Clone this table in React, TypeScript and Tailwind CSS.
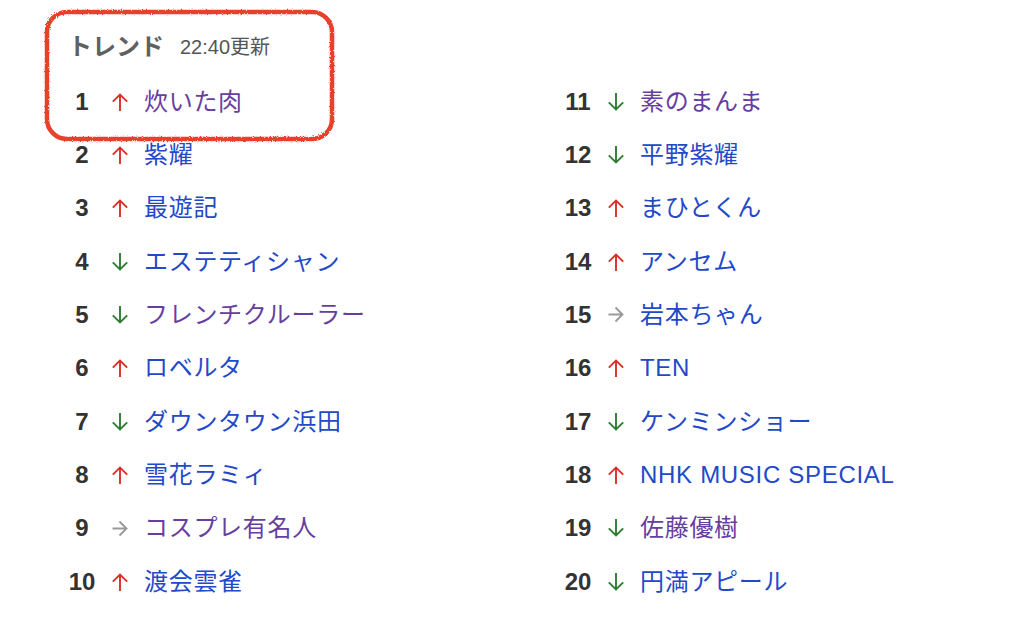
type Dir = 'up' | 'down' | 'flat';

interface Trend {
  rank: number;
  dir: Dir;
  word: string;
  visited?: boolean;
}

const left: Trend[] = [
  { rank: 1, dir: 'up', word: '炊いた肉', visited: true },
  { rank: 2, dir: 'up', word: '紫耀' },
  { rank: 3, dir: 'up', word: '最遊記' },
  { rank: 4, dir: 'down', word: 'エステティシャン' },
  { rank: 5, dir: 'down', word: 'フレンチクルーラー', visited: true },
  { rank: 6, dir: 'up', word: 'ロベルタ' },
  { rank: 7, dir: 'down', word: 'ダウンタウン浜田' },
  { rank: 8, dir: 'up', word: '雪花ラミィ' },
  { rank: 9, dir: 'flat', word: 'コスプレ有名人', visited: true },
  { rank: 10, dir: 'up', word: '渡会雲雀' },
];

const right: Trend[] = [
  { rank: 11, dir: 'down', word: '素のまんま', visited: true },
  { rank: 12, dir: 'down', word: '平野紫耀' },
  { rank: 13, dir: 'up', word: 'まひとくん' },
  { rank: 14, dir: 'up', word: 'アンセム' },
  { rank: 15, dir: 'flat', word: '岩本ちゃん' },
  { rank: 16, dir: 'up', word: 'TEN' },
  { rank: 17, dir: 'down', word: 'ケンミンショー' },
  { rank: 18, dir: 'up', word: 'NHK MUSIC SPECIAL' },
  { rank: 19, dir: 'down', word: '佐藤優樹', visited: true },
  { rank: 20, dir: 'down', word: '円満アピール' },
];

function Arrow({ dir }: { dir: Dir }) {
  if (dir === 'flat') {
    return (
      <svg width="16" height="17" viewBox="0 0 16 17" fill="none" stroke="#9a9a9a" strokeWidth="1.9">
        <path d="M0.5 8.5h14.5M7.5 1.5l7 7-7 7" />
      </svg>
    );
  }
  const color = dir === 'up' ? '#d9302a' : '#2e7d32';
  return (
    <svg
      width="16"
      height="18"
      viewBox="0 0 16 18"
      fill="none"
      stroke={color}
      strokeWidth="1.9"
      className={dir === 'down' ? 'rotate-180' : ''}
    >
      <path d="M8 1.5V18M0.8 8.7L8 1.5l7.2 7.2" />
    </svg>
  );
}

function Row({ t }: { t: Trend }) {
  return (
    <div className="flex h-[53.33px] items-center">
      <div className="w-[28px] text-center text-[24px] font-bold text-[#333]">{t.rank}</div>
      <div className="ml-[16px] flex h-[18px] w-[16px] items-center">
        <Arrow dir={t.dir} />
      </div>
      <div
        className={
          'ml-[16px] text-[24px] leading-none tracking-[0.7px] ' +
          (t.visited ? 'text-[#673e9f]' : 'text-[#2349c9]')
        }
      >
        {t.word}
      </div>
    </div>
  );
}

export default function App() {
  return (
    <div
      className="relative h-[641px] w-[1024px] overflow-hidden bg-white pl-[68px] pt-[33px]"
      style={{ fontFamily: '"Liberation Sans", "Noto Sans CJK JP", sans-serif' }}
    >
      {/* Header */}
      <div className="flex h-[28px] items-center">
        <span className="text-[24px] font-bold text-[#606060]">トレンド</span>
        <span className="ml-[16px] text-[20px] text-[#555]">22:40更新</span>
      </div>

      {/* List */}
      <div className="mt-[14px] grid grid-cols-[496px_1fr]">
        <div className="flex flex-col">
          {left.map((t) => (
            <Row key={t.rank} t={t} />
          ))}
        </div>
        <div className="flex flex-col">
          {right.map((t) => (
            <Row key={t.rank} t={t} />
          ))}
        </div>
      </div>

      {/* Hand-drawn highlight */}
      <svg className="pointer-events-none absolute left-0 top-0" width="1024" height="641">
        <defs>
          <filter id="rough">
            <feTurbulence type="fractalNoise" baseFrequency="1.2" numOctaves="2" result="n" />
            <feDisplacementMap in="SourceGraphic" in2="n" scale="3" />
          </filter>
        </defs>
        <rect
          x="47"
          y="12"
          width="285"
          height="127"
          rx="20"
          fill="none"
          stroke="#e8412c"
          strokeWidth="4.5"
          filter="url(#rough)"
        />
      </svg>
    </div>
  );
}
